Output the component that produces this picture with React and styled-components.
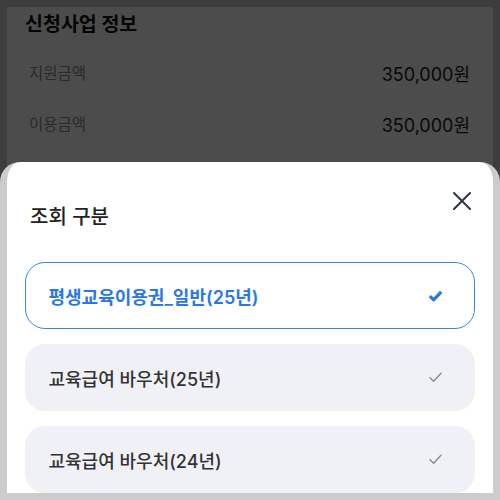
import styled, { createGlobalStyle } from "styled-components";

const GlobalStyle = createGlobalStyle`
  html, body {
    margin: 0;
    padding: 0;
    background: #ccc;
  }
  * { box-sizing: border-box; }
  body {
    font-family: "Inter", "Noto Sans CJK KR", "Noto Sans", sans-serif;
  }
`;

const Frame = styled.div`
  position: relative;
  width: 500px;
  height: 500px;
  padding: 7px;
  background: #ccc;
  overflow: hidden;
`;

const Screen = styled.div`
  height: 100%;
  background: #fff;
`;

const SectionTitle = styled.h2`
  margin: 0;
  padding: 2px 0 0 18px;
  font-size: 19.5px;
  font-weight: 700;
  line-height: 30px;
  color: #111;
`;

const InfoList = styled.div`
  display: flex;
  flex-direction: column;
  margin-top: 7px;
  padding: 0 23px 0 22px;
`;

const InfoRow = styled.div`
  display: flex;
  align-items: center;
  justify-content: space-between;
  height: 51px;
`;

const Label = styled.span`
  font-size: 15.5px;
  color: #8c8c8c;
`;

const Value = styled.span`
  font-size: 18px;
  color: #1c1c1c;
  margin-top: 3px;
`;

const Dim = styled.div`
  position: absolute;
  inset: 0;
  background: rgba(0, 0, 0, 0.7);
`;

const Sheet = styled.div`
  position: absolute;
  left: 0;
  right: 0;
  bottom: 0;
  height: 338px;
  background: #fff;
  border: 7px solid #ccc;
  border-top: none;
  border-radius: 20px 20px 0 0;
  overflow: hidden;
`;

const SheetHeader = styled.div`
  display: flex;
  justify-content: space-between;
  align-items: flex-start;
  padding: 27px 19px 0 23px;
`;

const SheetTitle = styled.h3`
  margin: 14px 0 0;
  font-size: 20px;
  font-weight: 500;
  line-height: 28px;
  color: #222;
`;

const CloseButton = styled.button`
  display: flex;
  align-items: center;
  justify-content: center;
  width: 24px;
  height: 24px;
  padding: 0;
  border: none;
  background: none;
  color: #2f3545;
`;

const OptionList = styled.div`
  display: flex;
  flex-direction: column;
  gap: 15px;
  margin-top: 31px;
  padding: 0 18px;
`;

const Option = styled.div`
  display: flex;
  align-items: center;
  justify-content: space-between;
  flex-shrink: 0;
  height: 67px;
  padding: 0 31px 0 22.5px;
  border-radius: 20px;
  border: 1.5px solid ${(p) => (p.$selected ? "#3a84e6" : "transparent")};
  background: ${(p) => (p.$selected ? "#fff" : "#f0f1f6")};
  color: ${(p) => (p.$selected ? "#2c78e2" : "#333")};
  font-size: 18px;
  font-weight: ${(p) => (p.$selected ? 600 : 500)};
`;

const CheckBox = styled.span`
  display: flex;
  align-items: center;
  justify-content: center;
  width: 16px;
  height: 16px;
  color: ${(p) => (p.$selected ? "#2c78e2" : "#8a8a8a")};
`;

function CloseIcon() {
  return (
    <svg width="18" height="18" viewBox="0 0 18 18" fill="none">
      <path d="M1 1L17 17M17 1L1 17" stroke="currentColor" strokeWidth="2" strokeLinecap="round" />
    </svg>
  );
}

function CheckIcon({ selected }) {
  if (selected) {
    return (
      <svg width="15" height="12" viewBox="0 0 15 12" fill="none">
        <path d="M1.8 6.2L5.6 9.8L13.2 1.8" stroke="currentColor" strokeWidth="3.2" strokeLinejoin="round" />
      </svg>
    );
  }
  return (
    <svg width="13" height="11" viewBox="0 0 13 11" fill="none">
      <path d="M1 5.8L4.6 9.2L12 1.2" stroke="currentColor" strokeWidth="1.4" strokeLinecap="round" strokeLinejoin="round" />
    </svg>
  );
}

const info = [
  { label: "지원금액", value: "350,000원" },
  { label: "이용금액", value: "350,000원" },
];

const options = [
  { name: "평생교육이용권_일반(25년)", selected: true },
  { name: "교육급여 바우처(25년)", selected: false },
  { name: "교육급여 바우처(24년)", selected: false },
];

export default function App() {
  return (
    <>
      <GlobalStyle />
      <Frame>
        <Screen>
          <SectionTitle>신청사업 정보</SectionTitle>
          <InfoList>
            {info.map((row) => (
              <InfoRow key={row.label}>
                <Label>{row.label}</Label>
                <Value>{row.value}</Value>
              </InfoRow>
            ))}
          </InfoList>
        </Screen>
        <Dim />
        <Sheet>
          <SheetHeader>
            <SheetTitle>조회 구분</SheetTitle>
            <CloseButton aria-label="닫기">
              <CloseIcon />
            </CloseButton>
          </SheetHeader>
          <OptionList>
            {options.map((opt) => (
              <Option key={opt.name} $selected={opt.selected}>
                <span>{opt.name}</span>
                <CheckBox $selected={opt.selected}>
                  <CheckIcon selected={opt.selected} />
                </CheckBox>
              </Option>
            ))}
          </OptionList>
        </Sheet>
      </Frame>
    </>
  );
}
